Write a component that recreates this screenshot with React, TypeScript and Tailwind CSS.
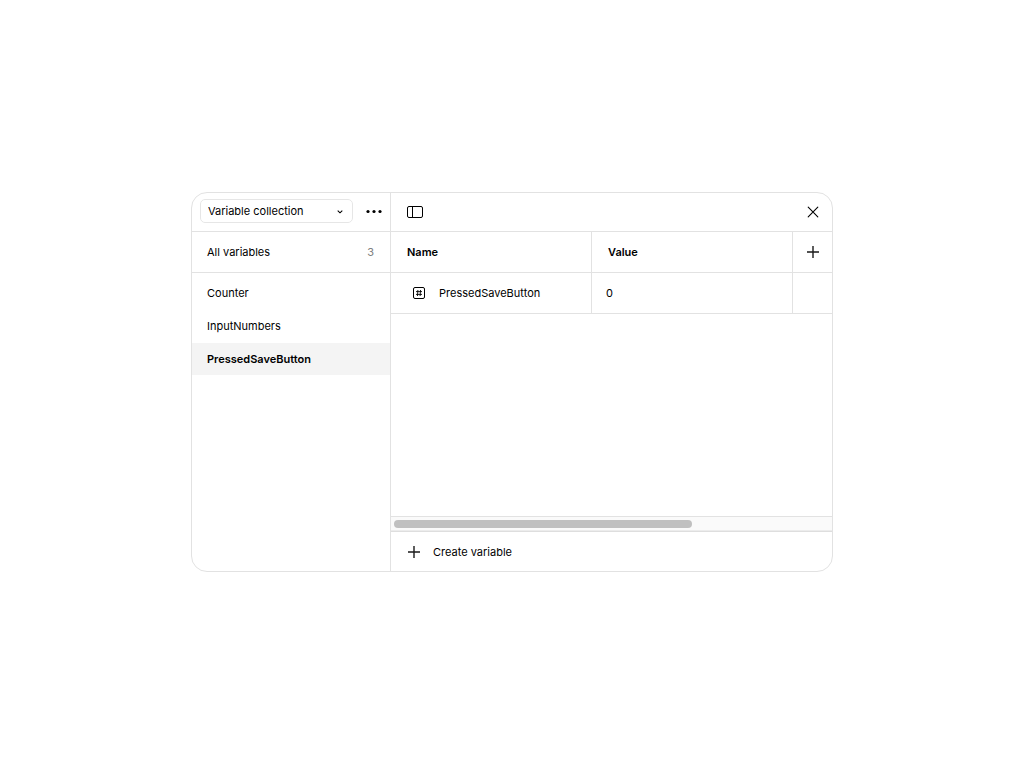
const COLLECTION_ITEMS = ['Counter', 'InputNumbers', 'PressedSaveButton'];

const SELECTED = 'PressedSaveButton';

const ROWS = [{ name: 'PressedSaveButton', value: '0' }];

const PlusIcon = () => (
  <svg className="h-3 w-3" viewBox="0 0 12 12" fill="none" stroke="#1a1a1a" strokeWidth="1.4" aria-hidden="true">
    <path d="M6 0v12M0 6h12" />
  </svg>
);

const CloseIcon = () => (
  <svg className="h-3 w-3" viewBox="0 0 12 12" fill="none" stroke="black" strokeWidth="1.1" strokeLinecap="round" aria-hidden="true">
    <path d="M1.2 1.2l9.6 9.6M10.8 1.2l-9.6 9.6" />
  </svg>
);

const SidebarIcon = () => (
  <svg className="h-3 w-4" viewBox="0 0 16 12" fill="none" stroke="black" aria-hidden="true">
    <rect x="0.5" y="0.5" width="15" height="11" rx="1.5" />
    <path d="M5.5 0.5v11" />
  </svg>
);

const MoreIcon = () => (
  <svg className="h-4 w-4" viewBox="0 0 16 16" fill="black" aria-hidden="true">
    <circle cx="2" cy="8.5" r="1.6" />
    <circle cx="8" cy="8.5" r="1.6" />
    <circle cx="14" cy="8.5" r="1.6" />
  </svg>
);

const NumberIcon = () => (
  <svg className="h-3 w-3 shrink-0" viewBox="0 0 12 12" fill="none" stroke="black" aria-hidden="true">
    <rect x="0.5" y="0.5" width="11" height="11" rx="1.5" />
    <path d="M4.9 3L4.5 9M7.5 3L7.1 9M3 4.6h6M3 7.4h6" strokeWidth="0.9" />
  </svg>
);

const Sidebar = () => (
  <aside className="flex w-[199px] shrink-0 flex-col border-r border-[#e2e2e2]">
    <div className="flex h-[39px] items-center justify-between border-b border-[#e2e2e2] px-2 pb-0.5">
      <div className="relative w-[153px]">
        <select
          aria-label="Collection"
          className="block h-6 w-full appearance-none rounded-[5px] border border-[#e6e6e6] bg-white px-[7px] text-[11px] leading-4"
        >
          <option>Variable collection</option>
        </select>
        <svg
          className="pointer-events-none absolute top-2 right-[9px] h-2 w-2"
          viewBox="0 0 8 8"
          fill="none"
          stroke="black"
          strokeWidth="1.1"
          aria-hidden="true"
        >
          <path d="M1.7 3.7L4 5.8l2.3-2.1" />
        </svg>
      </div>
      <button type="button" aria-label="More options">
        <MoreIcon />
      </button>
    </div>

    <button
      type="button"
      className="flex h-[41px] items-center justify-between border-b border-[#e2e2e2] pr-4 pl-[15px]"
    >
      <span>All variables</span>
      <span className="text-[#808080]">3</span>
    </button>

    <nav className="flex flex-col gap-px pt-1">
      {COLLECTION_ITEMS.map((item) => (
        <button
          key={item}
          type="button"
          className={
            item === SELECTED
              ? 'h-8 bg-[#f4f4f4] px-[15px] text-left font-semibold'
              : 'h-8 px-[15px] text-left'
          }
        >
          {item}
        </button>
      ))}
    </nav>
  </aside>
);

const VariablesTable = () => (
  <table className="w-full table-fixed border-separate border-spacing-0 text-left">
    <thead>
      <tr className="h-[41px]">
        <th className="border-r border-b border-[#e2e2e2] px-4 font-semibold">Name</th>
        <th className="border-r border-b border-[#e2e2e2] px-4 font-semibold">Value</th>
        <th className="w-[39px] border-b border-[#e2e2e2]">
          <button type="button" aria-label="Add mode" className="flex w-full justify-center">
            <PlusIcon />
          </button>
        </th>
      </tr>
    </thead>
    <tbody>
      {ROWS.map((row) => (
        <tr key={row.name} className="h-[41px]">
          <td className="border-r border-b border-[#e2e2e2] px-[22px]">
            <span className="flex items-center gap-[14px]">
              <NumberIcon />
              {row.name}
            </span>
          </td>
          <td className="border-r border-b border-[#e2e2e2] px-[14px]">{row.value}</td>
          <td className="border-b border-[#e2e2e2]" />
        </tr>
      ))}
    </tbody>
  </table>
);

const App = () => {
  return (
    <main className="flex min-h-screen items-center justify-center bg-white px-4 pb-1 font-['Inter',sans-serif] text-[11px] leading-4 text-black">
      <div className="flex min-h-[380px] w-full max-w-[642px] overflow-hidden rounded-2xl border border-[#e2e2e2]">
        <Sidebar />

        <section className="flex min-w-0 flex-1 flex-col">
          <header className="flex h-[39px] items-center justify-between border-b border-[#e2e2e2] pr-[13px] pl-4">
            <button type="button" aria-label="Toggle sidebar">
              <SidebarIcon />
            </button>
            <button type="button" aria-label="Close">
              <CloseIcon />
            </button>
          </header>

          <div className="flex-1">
            <VariablesTable />
          </div>

          <div className="border-t border-b border-t-[#e2e2e2] border-b-[#ececec] bg-[#fafafa] px-[3px] pt-[3px] pb-[2px]">
            <div className="h-2 w-[298px] max-w-full rounded-full bg-[#c0c0c0]" />
          </div>

          <footer className="flex h-10 items-center border-t border-[#dedede] px-[17px]">
            <button type="button" className="flex items-center gap-[13px]">
              <PlusIcon />
              Create variable
            </button>
          </footer>
        </section>
      </div>
    </main>
  );
};

export default App;
